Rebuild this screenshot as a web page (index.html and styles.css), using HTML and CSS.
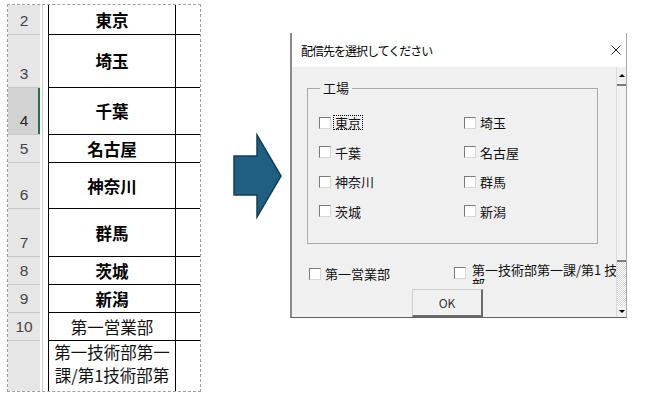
FILE: index.html
```html
<!DOCTYPE html>
<html lang="ja">
<head>
    <meta charset="UTF-8">
    <title>配信先の選択</title>
    <link rel="stylesheet" href="styles.css">
</head>
<body>
<div class="page">
    <!-- Excelシート（B列） -->
    <div class="sheet">
        <div class="rh">2</div><div class="ca"></div><div class="cb b">東京</div><div class="cc"></div>
        <div class="rh">3</div><div class="ca"></div><div class="cb b">埼玉</div><div class="cc"></div>
        <div class="rh sel">4</div><div class="ca"></div><div class="cb b">千葉</div><div class="cc"></div>
        <div class="rh">5</div><div class="ca"></div><div class="cb b">名古屋</div><div class="cc"></div>
        <div class="rh">6</div><div class="ca"></div><div class="cb b">神奈川</div><div class="cc"></div>
        <div class="rh">7</div><div class="ca"></div><div class="cb b">群馬</div><div class="cc"></div>
        <div class="rh">8</div><div class="ca"></div><div class="cb b">茨城</div><div class="cc"></div>
        <div class="rh">9</div><div class="ca"></div><div class="cb b">新潟</div><div class="cc"></div>
        <div class="rh">10</div><div class="ca"></div><div class="cb">第一営業部</div><div class="cc"></div>
        <div class="rh end"></div><div class="ca"></div><div class="cb wrap">第一技術部第一課/第1技術部第一課</div><div class="cc end"></div>
    </div>

    <svg class="arrow" width="51" height="86" viewBox="0 0 51 86">
        <polygon points="2,23 25,23 25,2 49,43 25,84 25,62 2,62" fill="#1f5f82" stroke="#143e55" stroke-width="1.5"/>
    </svg>

    <!-- ユーザーフォーム -->
    <div class="dialog">
        <div class="titlebar">
            <span class="title">配信先を選択してください</span>
            <svg class="close" width="10" height="10" viewBox="0 0 10 10">
                <path d="M0.5 0.5 L9.5 9.5 M9.5 0.5 L0.5 9.5" stroke="#222" stroke-width="1" fill="none"/>
            </svg>
        </div>
        <div class="dlg-body">
            <div class="dlg-content">
                <fieldset class="frame">
                    <legend>工場</legend>
                    <div class="chk"><span class="box"></span><span class="lbl focus">東京</span></div>
                    <div class="chk"><span class="box"></span><span class="lbl">埼玉</span></div>
                    <div class="chk"><span class="box"></span><span class="lbl">千葉</span></div>
                    <div class="chk"><span class="box"></span><span class="lbl">名古屋</span></div>
                    <div class="chk"><span class="box"></span><span class="lbl">神奈川</span></div>
                    <div class="chk"><span class="box"></span><span class="lbl">群馬</span></div>
                    <div class="chk"><span class="box"></span><span class="lbl">茨城</span></div>
                    <div class="chk"><span class="box"></span><span class="lbl">新潟</span></div>
                </fieldset>
                <div class="opts">
                    <div class="opt1"><span class="box"></span><span>第一営業部</span></div>
                    <div class="opt2"><span class="box"></span><span class="lbl2">第一技術部第一課/第1 技<br>部</span></div>
                </div>
                <button class="ok">OK</button>
            </div>
            <div class="scrollbar">
                <div class="sb-up"></div>
                <div class="sb-thumb"></div>
                <div class="sb-track"></div>
                <div class="sb-down"></div>
            </div>
        </div>
    </div>
</div>
</body>
</html>
```

FILE: styles.css
```css
body {
    margin: 0;
    background: #fff;
    font-family: "Noto Sans CJK JP", sans-serif;
}

.page {
    display: flex;
    align-items: flex-start;
    width: 663px;
    height: 399px;
    overflow: hidden;
}

/* シート */
.sheet {
    flex: none;
    margin: 4px 0 0 7px;
    width: 192px;
    height: 386px;
    border: 1px dashed #a0a0a0;
    display: grid;
    grid-template-columns: 32px 8px 128px 1fr;
    grid-template-rows: 30px 53px 47px 28px 46px 48px 28px 28px 28px 1fr;
    overflow: hidden;
}

.rh {
    background: #e6e6e6;
    border-bottom: 1px solid #c8c8c8;
    color: #444;
    font: 15.5px/22px "Liberation Sans", Arial, sans-serif;
    display: flex;
    align-items: flex-end;
    justify-content: center;
    padding-bottom: 2px;
}

.rh.sel {
    background: #d2d2d2;
    box-shadow: inset -2px 0 #217346;
    color: #262626;
}

.rh.end { border-bottom: none; }

.ca {
    margin-left: 2px;
    border-left: 1px solid #cfcfcf;
}

.cb {
    border-left: 1px solid #000;
    border-right: 1px solid #000;
    border-bottom: 1px solid #000;
    display: flex;
    align-items: center;
    justify-content: center;
    font-size: 16.5px;
    color: #111;
}

.cb.b { font-weight: 700; color: #000; }

.cb.wrap {
    display: block;
    border-bottom: none;
    text-align: center;
    line-height: 23px;
    overflow: hidden;
}

.cc { border-bottom: 1px solid #000; }
.cc.end { border-bottom: none; }

.arrow {
    flex: none;
    margin: 133px 0 0 31px;
}

/* ダイアログ */
.dialog {
    flex: none;
    margin: 33px 0 0 7px;
    width: 334px;
    border-left: 2px solid #8a8a8a;
    border-right: 1px solid #a8a8a8;
    border-bottom: 1px solid #5f5f5f;
    background: #f0f0f0;
}

.titlebar {
    height: 34px;
    box-sizing: border-box;
    background: #fff;
    display: flex;
    align-items: center;
    justify-content: space-between;
    padding: 0 5px 0 9px;
    font-size: 12px;
    letter-spacing: -1px;
    color: #000;
}

.dlg-body {
    display: flex;
    height: 250px;
}

.dlg-content {
    flex: 1;
    display: flex;
    flex-direction: column;
    align-items: flex-start;
}

.frame {
    margin: 14px 0 0 15px;
    padding: 13px 0 0 11px;
    width: 291px;
    height: 163px;
    box-sizing: border-box;
    min-width: 0;
    border: 1px solid #a9a9a9;
    display: grid;
    grid-template-columns: 145px 1fr;
    grid-auto-rows: 29.5px;
    align-content: start;
}

.frame legend {
    margin-left: 1px;
    padding: 0 3px;
    font-size: 13px;
    line-height: 14px;
    color: #111;
}

.chk {
    display: flex;
    align-items: center;
    gap: 2px;
    font-size: 13px;
    line-height: 13px;
    color: #111;
}

.box {
    flex: none;
    width: 10px;
    height: 10px;
    border: 1px solid;
    border-color: #7a7a7a #d6d6d6 #d6d6d6 #7a7a7a;
    background: #fff;
}

.lbl {
    border: 1px solid transparent;
    padding: 0 1px;
}

.lbl.focus { border: 1px dotted #000; }

.opts {
    display: flex;
    margin: 19px 0 0 17px;
    height: 21px;
    font-size: 13px;
    line-height: 14px;
    color: #111;
}

.opt1 {
    width: 145px;
    display: flex;
    align-items: center;
    gap: 4px;
}

.opt2 {
    display: flex;
    align-items: flex-start;
    gap: 6px;
}

.opt2 .box { margin-top: 4px; }

.lbl2 {
    width: 144px;
    height: 21px;
    overflow: hidden;
    white-space: nowrap;
}

.ok {
    margin: 5px 0 0 120px;
    width: 71px;
    height: 28px;
    box-sizing: border-box;
    padding: 0;
    background: #f1f1f1;
    border-style: solid;
    border-width: 1px 2px 2px 1px;
    border-color: #d0d0d0 #6a6a6a #6a6a6a #d0d0d0;
    font: 12px "Noto Sans CJK JP", sans-serif;
    color: #333;
}

/* スクロールバー */
.scrollbar {
    width: 10px;
    box-sizing: border-box;
    border-left: 1px solid #dcdcdc;
    display: flex;
    flex-direction: column;
}

.sb-up {
    height: 17px;
    border-bottom: 2px solid #7d7d7d;
    display: flex;
    align-items: center;
    justify-content: center;
}

.sb-up::after {
    content: "";
    border-left: 3px solid transparent;
    border-right: 3px solid transparent;
    border-bottom: 3px solid #000;
}

.sb-thumb {
    height: 174px;
    border-bottom: 2px solid #7a7a7a;
    background: #f3f3f3;
}

.sb-track {
    flex: 1;
    background: repeating-conic-gradient(#fff 0 25%, #d8d8d8 0 50%) 0 0 / 2px 2px;
}

.sb-down {
    height: 11px;
    display: flex;
    align-items: center;
    justify-content: center;
}

.sb-down::after {
    content: "";
    border-left: 3px solid transparent;
    border-right: 3px solid transparent;
    border-top: 3px solid #000;
}
```
